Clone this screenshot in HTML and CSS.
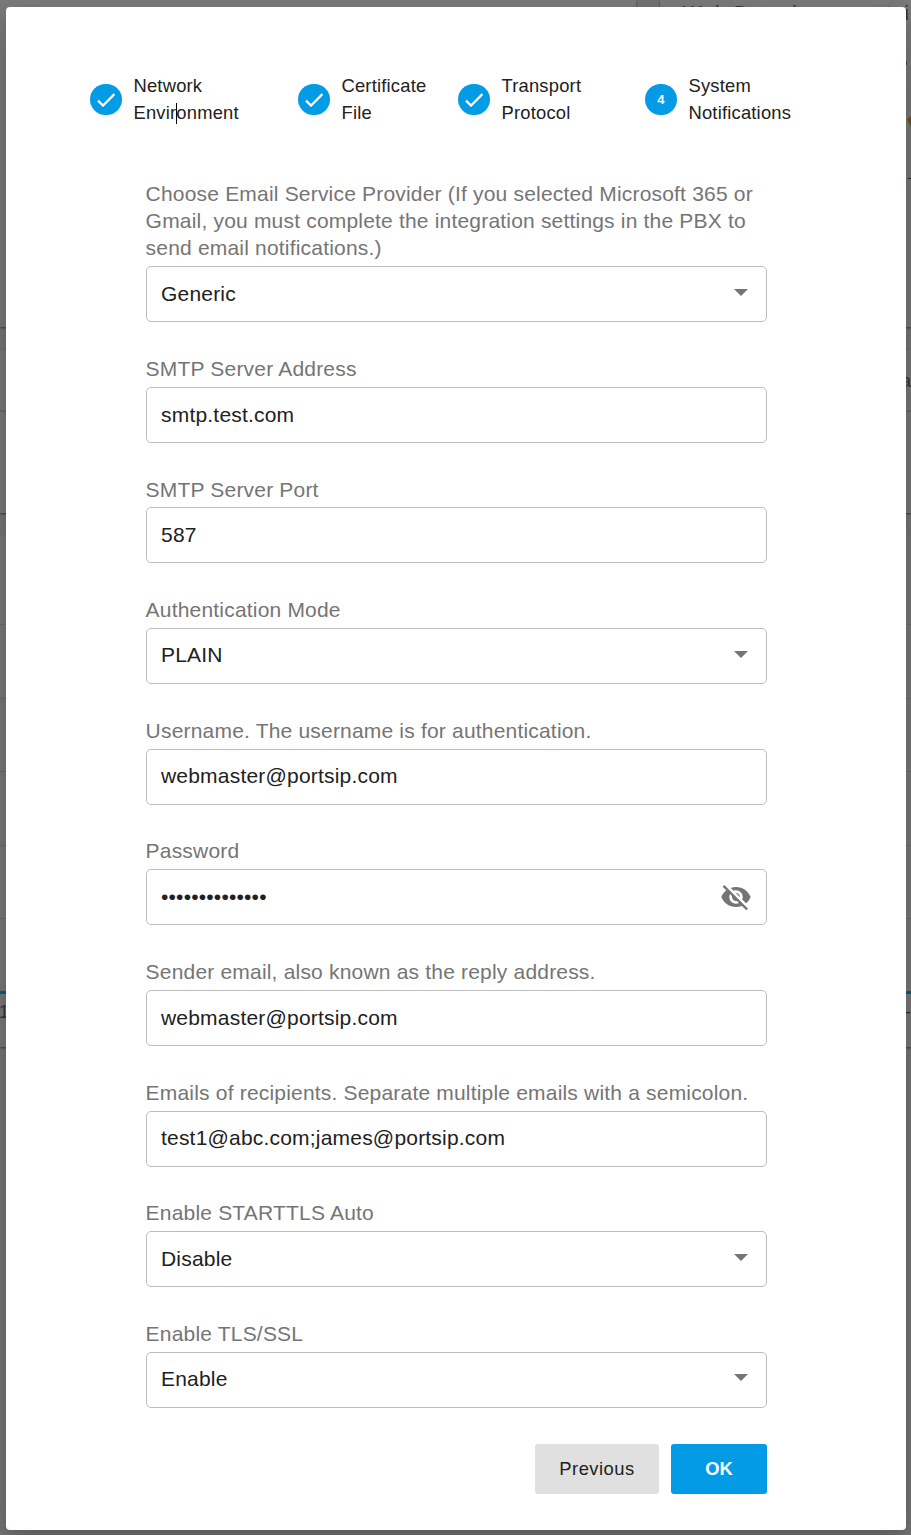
FILE: index.html
```html
<!DOCTYPE html>
<html lang="en">
<head>
<meta charset="utf-8">
<title>System Notifications</title>
<link rel="stylesheet" href="styles.css">
</head>
<body>
<svg class="defs" width="0" height="0">
  <symbol id="check" viewBox="0 0 24 24"><path d="M9 16.17 4.83 12l-1.42 1.41L9 19 21 7l-1.41-1.41z"/></symbol>
  <symbol id="arrow" viewBox="0 0 14 7"><path d="M0 0h14L7 7z"/></symbol>
</svg>
<div class="page">
  <div class="row-top"><div class="card"></div><div class="card domain"><span>Web Domain: uc.portsi</span></div></div>
  <div class="card summary"><div class="head">a</div></div>
  <div class="card list"><div class="line first"></div><div class="line"></div><div class="line"></div><div class="line"></div><div class="line"></div><div class="line last"></div><div class="foot"><span>1</span><span>-</span></div></div>
  <i class="frag blue"></i><i class="frag gold"></i><i class="frag dash"></i>
</div>
<main class="dialog">
  <ol class="steps">
    <li class="step s1"><span class="dot"><svg><use href="#check"/></svg></span><span class="name">Network<br>Envir<i class="caret"></i>onment</span></li>
    <li class="step s2"><span class="dot"><svg><use href="#check"/></svg></span><span class="name">Certificate<br>File</span></li>
    <li class="step s3"><span class="dot"><svg><use href="#check"/></svg></span><span class="name">Transport<br>Protocol</span></li>
    <li class="step"><span class="dot">4</span><span class="name">System<br>Notifications</span></li>
  </ol>
  <form class="form">
    <div class="field"><label>Choose Email Service Provider (If you selected Microsoft 365 or<br>Gmail, you must complete the integration settings in the PBX to<br>send email notifications.)</label><div class="box select">Generic<svg class="arrow"><use href="#arrow"/></svg></div></div>
    <div class="field"><label>SMTP Server Address</label><div class="box">smtp.test.com</div></div>
    <div class="field"><label>SMTP Server Port</label><div class="box">587</div></div>
    <div class="field"><label>Authentication Mode</label><div class="box select">PLAIN<svg class="arrow"><use href="#arrow"/></svg></div></div>
    <div class="field"><label>Username. The username is for authentication.</label><div class="box">webmaster@portsip.com</div></div>
    <div class="field"><label>Password</label><div class="box"><span class="secret">••••••••••••••</span><svg class="eye" viewBox="0 0 24 24"><path d="M12 7c2.76 0 5 2.24 5 5 0 .65-.13 1.26-.36 1.83l2.92 2.92c1.51-1.26 2.7-2.89 3.43-4.75-1.73-4.39-6-7.5-11-7.5-1.4 0-2.74.25-3.98.7l2.16 2.16C10.74 7.13 11.35 7 12 7zM2 4.27l2.28 2.28.46.46C3.08 8.3 1.78 10.02 1 12c1.73 4.39 6 7.5 11 7.5 1.55 0 3.03-.3 4.38-.84l.42.42L19.73 22 21 20.73 3.27 3 2 4.27zM7.53 9.8l1.55 1.55c-.05.21-.08.43-.08.65 0 1.66 1.34 3 3 3 .22 0 .44-.03.65-.08l1.55 1.55c-.67.33-1.41.53-2.2.53-2.76 0-5-2.24-5-5 0-.79.2-1.53.53-2.2zm4.31-.78 3.15 3.15.02-.16c0-1.66-1.34-3-3-3l-.17.01z"/></svg></div></div>
    <div class="field"><label>Sender email, also known as the reply address.</label><div class="box">webmaster@portsip.com</div></div>
    <div class="field"><label>Emails of recipients. Separate multiple emails with a semicolon.</label><div class="box">test1@abc.com;james@portsip.com</div></div>
    <div class="field"><label>Enable STARTTLS Auto</label><div class="box select">Disable<svg class="arrow"><use href="#arrow"/></svg></div></div>
    <div class="field"><label>Enable TLS/SSL</label><div class="box select">Enable<svg class="arrow"><use href="#arrow"/></svg></div></div>
    <div class="actions"><button type="button" class="btn">Previous</button><button type="button" class="btn primary">OK</button></div>
  </form>
</main>
</body>
</html>
```
FILE: styles.css
```css
* { box-sizing: border-box; }
body { margin: 0; width: 911px; height: 1535px; overflow: hidden; position: relative; font-family: "Liberation Sans", Arial, sans-serif; color: #212121; }
.defs { position: absolute; }
.page { height: 1535px; background: #717373; display: flex; flex-direction: column; gap: 23px; font-size: 18px; color: #333; }
.card { background: #757575; box-shadow: 0 1px 2px #3c3c3c; }
.row-top { height: 327px; display: grid; grid-template-columns: 636px 1fr; gap: 24px; }
.row-top .card { background: linear-gradient(#7a7a7a, #757575 90px); overflow: hidden; }
.domain { padding: 3px 0 0 23px; font-size: 20px; line-height: 20px; white-space: nowrap; letter-spacing: 1.2px; }
.summary { height: 163px; }
.head { height: 62px; border-bottom: 2px solid #666; text-align: right; padding-top: 21px; }
.list { height: 511px; }
.line { height: 73.6px; border-bottom: 1px solid #686868; }
.line.first { height: 89px; }
.line.last { height: 75px; border-bottom: 3px solid #075b7d; }
.foot { display: flex; justify-content: space-between; padding: 8px 0 0; margin-left: -1px; }
.frag { position: absolute; right: 0; width: 5px; }
.blue { right: 4px; top: 61px; height: 4px; width: 2px; background: #17516d; }
.gold { top: 116px; height: 11px; width: 4px; background: #66501f; clip-path: polygon(0 30%, 100% 0, 100% 100%); }
.dash { top: 178px; height: 1px; width: 3px; background: #26323b; }
.dialog { position: absolute; left: 6px; top: 7px; width: 900px; height: 1523px; background: #fff; border-radius: 4px; box-shadow: 0 10px 18px rgba(0,0,0,.16), 0 2px 30px rgba(0,0,0,.06); padding: 65px 0 0; }
.steps { list-style: none; margin: 0; padding: 0 0 0 84px; display: flex; height: 55px; }
.step { display: flex; align-items: center; gap: 12px; }
.s1 { width: 208px; }
.s2 { width: 160px; }
.s3 { width: 187px; }
.dot { width: 31.5px; height: 31.5px; border-radius: 50%; background: #039be5; color: #fff; display: flex; align-items: center; justify-content: center; font-size: 13px; font-weight: 700; flex: none; }
.dot svg { width: 24px; height: 24px; fill: #fff; stroke: #fff; stroke-width: .4; }
.name { font-size: 18.375px; line-height: 27px; letter-spacing: .2px; white-space: nowrap; position: relative; top: -.5px; }
.caret { display: inline-block; width: 1px; height: 21px; margin-right: -1px; vertical-align: -5px; background: #000; }
.form { margin: 53.35px 0 0 140px; width: 621px; display: flex; flex-direction: column; gap: 32.83px; }
.field { display: flex; flex-direction: column; gap: 4.8px; }
label { font-size: 21px; line-height: 27px; letter-spacing: .19px; margin-left: -.4px; color: #757575; white-space: nowrap; }
.box { height: 56px; border: 1px solid #bdbdbd; border-radius: 5px; padding: 0 18px .4px 14px; display: flex; align-items: center; justify-content: space-between; font-size: 21px; letter-spacing: .2px; line-height: 28px; }
.select { padding-bottom: 1.2px; }
.arrow { width: 14px; height: 7px; fill: #757575; margin-top: -2.4px; }
.eye { width: 32px; height: 32px; fill: #757575; margin-right: -4px; }
.actions { display: flex; justify-content: flex-end; gap: 12px; margin-top: 3.4px; }
.btn { width: 124px; height: 50px; border: 0; border-radius: 3px; background: #e0e0e0; color: #212121; font: 18.375px "Liberation Sans", Arial, sans-serif; letter-spacing: .5px; padding: 0; }
.btn.primary { width: 96px; background: #039be5; color: #fff; font-weight: 700; letter-spacing: 0; }
```
